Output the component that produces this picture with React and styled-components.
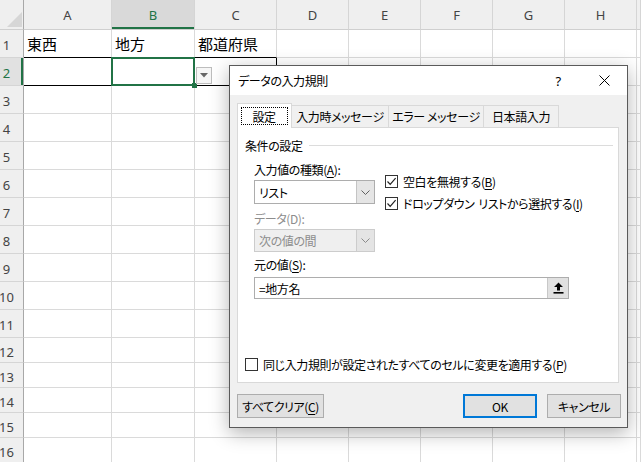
import React from 'react'
import styled, { createGlobalStyle } from 'styled-components'

const GlobalStyle = createGlobalStyle`
  html, body { margin: 0; padding: 0; background: #fff; overflow: hidden; }
`

const COLS = ['A', 'B', 'C', 'D', 'E', 'F', 'G', 'H', '']
const ROWS = Array.from({ length: 16 }, (_, i) => i + 1)
const DATA = { A1: '東西', B1: '地方', C1: '都道府県' }

const Screen = styled.div`
  position: relative;
  width: 641px;
  height: 462px;
  overflow: hidden;
  font-family: "Noto Sans CJK JP", "Noto Sans", sans-serif;
`

const Sheet = styled.div`
  display: grid;
  grid-template-columns: 24px 88px 83px 82px repeat(5, 72px) 1fr;
  grid-template-rows: 30px repeat(11, 28px) repeat(5, 25px);
`

const Corner = styled.div`
  background: #efefef;
  border-right: 1px solid #a8a8a8;
  border-bottom: 1px solid #cfcfcf;
  box-sizing: border-box;
  display: flex;
  align-items: flex-end;
  justify-content: flex-end;
  padding: 0 1px 2px 0;
`

const ColHead = styled.div`
  box-sizing: border-box;
  background: ${p => (p.$active ? '#d9d9d9' : '#efefef')};
  border-right: 1px solid #d5d5d5;
  border-bottom: 1px solid #cfcfcf;
  box-shadow: ${p => (p.$active ? 'inset 0 -2px 0 #217346' : 'none')};
  color: ${p => (p.$active ? '#217346' : '#444')};
  font-family: "Noto Sans", sans-serif;
  font-size: 13px;
  display: flex;
  align-items: center;
  justify-content: center;
`

const RowHead = styled.div`
  box-sizing: border-box;
  background: ${p => (p.$active ? '#e1e1e1' : '#efefef')};
  border-right: 1px solid #a8a8a8;
  border-bottom: 1px solid #d5d5d5;
  box-shadow: ${p => (p.$active ? 'inset -2px 0 0 #217346' : 'none')};
  color: ${p => (p.$active ? '#217346' : '#444')};
  font-family: "Noto Sans", sans-serif;
  font-size: 13px;
  display: flex;
  align-items: center;
  justify-content: center;
  padding: 3px 10px 0 0;
`

const Cell = styled.div`
  position: relative;
  box-sizing: border-box;
  border-right: 1px solid ${p => (p.$boxRight ? '#000' : '#dadada')};
  border-bottom: 1px solid ${p => (p.$boxBottom ? '#000' : '#dadada')};
  font-size: 15px;
  color: #000;
  display: flex;
  align-items: flex-end;
  padding: 0 0 3px 3px;
  white-space: nowrap;

  ${p => p.$selected && `
    &::after {
      content: '';
      position: absolute;
      left: -1px; top: -1px; right: -1px; bottom: -1px;
      border: 2px solid #217346;
      pointer-events: none;
    }
    &::before {
      content: '';
      position: absolute;
      right: -3px; bottom: -3px;
      width: 5px; height: 5px;
      background: #217346;
      z-index: 2;
    }
  `}
`

const CellDrop = styled.div`
  position: absolute;
  left: 1px;
  top: 9px;
  width: 16px;
  height: 17px;
  box-sizing: border-box;
  border: 1px solid #bdbdbd;
  background: #f6f6f6;
  display: flex;
  align-items: center;
  justify-content: center;
  z-index: 3;
`

/* ---------- dialog ---------- */

const Dialog = styled.div`
  position: absolute;
  left: 229px;
  top: 65px;
  width: 399px;
  height: 363px;
  box-sizing: border-box;
  border: 1px solid #5a5a5a;
  background: #f0f0f0;
  box-shadow: 0 5px 18px rgba(0, 0, 0, 0.3);
  display: flex;
  flex-direction: column;
  font-family: "Noto Sans CJK JP", sans-serif;
  font-size: 12px;
  letter-spacing: -0.4px;
  font-feature-settings: "palt";
  color: #000;
  z-index: 10;
`

const TitleBar = styled.div`
  height: 29px;
  background: #fff;
  display: flex;
  align-items: center;
  padding-left: 8px;
`

const Title = styled.div`
  flex: 1;
  font-size: 12px;
`

const TitleButton = styled.div`
  width: 46px;
  height: 29px;
  display: flex;
  align-items: center;
  justify-content: center;
  font-family: "Noto Sans", sans-serif;
  font-size: 13px;
`

const Body = styled.div`
  flex: 1;
  display: flex;
  flex-direction: column;
  padding: 8px 8px 9px 7px;
`

const TabRow = styled.div`
  display: flex;
  align-items: flex-end;
  height: 24px;
`

const Tab = styled.div`
  box-sizing: border-box;
  width: ${p => p.$w}px;
  height: ${p => (p.$active ? 25 : 22)}px;
  margin-left: ${p => (p.$first ? 0 : -1)}px;
  margin-bottom: ${p => (p.$active ? -1 : 0)}px;
  border: 1px solid #d9d9d9;
  border-bottom: none;
  background: ${p => (p.$active ? '#fff' : '#f0f0f0')};
  position: relative;
  z-index: ${p => (p.$active ? 2 : 1)};
  display: flex;
  justify-content: center;
  align-items: ${p => (p.$active ? 'flex-start' : 'center')};
  padding-top: ${p => (p.$active ? 3 : 0)}px;
  white-space: nowrap;
`

const FocusLabel = styled.span`
  box-sizing: border-box;
  width: 47px;
  height: 18px;
  border: 1px dotted #000;
  display: flex;
  align-items: center;
  justify-content: center;
  margin-left: -1px;
`

const Panel = styled.div`
  flex: 1;
  box-sizing: border-box;
  border: 1px solid #d9d9d9;
  background: #fff;
  display: flex;
  flex-direction: column;
  padding: 9px 5px 10px 7px;
`

const GroupHeader = styled.div`
  display: flex;
  align-items: center;
  gap: 6px;
  height: 16px;

  &::after {
    content: '';
    flex: 1;
    height: 1px;
    background: #dcdcdc;
  }
`

const Group = styled.div`
  display: flex;
  flex-direction: column;
  padding-left: 9px;
`

const FormRow = styled.div`
  display: flex;
  gap: 10px;
`

const LeftCol = styled.div`
  width: 121px;
  display: flex;
  flex-direction: column;
`

const RightCol = styled.div`
  display: flex;
  flex-direction: column;
  gap: 1px;
  padding-top: 18px;
`

const Label = styled.div`
  height: 16px;
  line-height: 16px;
  margin-top: ${p => p.$mt}px;
  color: ${p => (p.$disabled ? '#8d8d8d' : '#000')};
  white-space: nowrap;
`

const U = styled.span`
  text-decoration: underline;
  text-underline-offset: 2px;
`

const Gap = styled.span`
  display: inline-block;
  width: 4px;
`

const Select = styled.div`
  box-sizing: border-box;
  width: 121px;
  height: ${p => p.$h}px;
  margin-top: 2px;
  border: 1px solid ${p => (p.$disabled ? '#cccccc' : '#adadad')};
  background: ${p => (p.$disabled ? '#efefef' : '#fff')};
  display: flex;
`

const SelectValue = styled.div`
  flex: 1;
  display: flex;
  align-items: center;
  padding-left: 4px;
  color: ${p => (p.$disabled ? '#8d8d8d' : '#000')};
`

const SelectArrow = styled.div`
  width: 17px;
  background: ${p => (p.$disabled ? '#e4e4e4' : '#e5e5e5')};
  border-left: 1px solid ${p => (p.$disabled ? '#cccccc' : '#c4c4c4')};
  display: flex;
  align-items: center;
  justify-content: center;
`

const CheckRow = styled.div`
  display: flex;
  align-items: center;
  gap: 5px;
  height: 21px;
  white-space: nowrap;
`

const Box = styled.div`
  box-sizing: border-box;
  width: 13px;
  height: 13px;
  border: 1px solid #333;
  background: #fff;
  display: flex;
  align-items: center;
  justify-content: center;
`

const SourceInput = styled.div`
  box-sizing: border-box;
  width: 315px;
  height: 22px;
  margin-top: 4px;
  border: 1px solid #adadad;
  display: flex;
`

const InputText = styled.div`
  flex: 1;
  display: flex;
  align-items: center;
  padding-left: 4px;
`

const RefButton = styled.div`
  width: 20px;
  background: #e1e1e1;
  border-left: 1px solid #c8c8c8;
  display: flex;
  align-items: center;
  justify-content: center;
`

const BottomCheck = styled(CheckRow)`
  margin-top: auto;
  height: 16px;
`

const ButtonRow = styled.div`
  display: flex;
  align-items: center;
  gap: 10px;
  margin-top: 11px;
  margin-right: -2px;
`

const Button = styled.div`
  box-sizing: border-box;
  width: ${p => p.$w}px;
  height: 24px;
  border: ${p => (p.$primary ? '2px solid #0078d7' : '1px solid #adadad')};
  background: #e1e1e1;
  display: flex;
  align-items: center;
  justify-content: center;
  margin-left: ${p => (p.$push ? 'auto' : 0)};
  white-space: nowrap;
`

const Chevron = ({ color = '#606060' }) => (
  <svg width="9" height="5" viewBox="0 0 9 5">
    <polyline points="0.5,0.5 4.5,4.5 8.5,0.5" fill="none" stroke={color} strokeWidth="1" />
  </svg>
)

const Check = () => (
  <svg width="11" height="11" viewBox="0 0 11 11">
    <polyline points="1.5,5.5 4.2,8.3 9.6,2.2" fill="none" stroke="#222" strokeWidth="1.2" />
  </svg>
)

const UpArrow = () => (
  <svg width="11" height="12" viewBox="0 0 11 12">
    <polygon points="5.5,0.5 10,5 7,5 7,8.5 4,8.5 4,5 1,5" fill="#000" />
    <rect x="0.5" y="10" width="10" height="1.6" fill="#000" />
  </svg>
)

const CloseIcon = () => (
  <svg width="11" height="11" viewBox="0 0 11 11">
    <path d="M0.5 0.5 L10.5 10.5 M10.5 0.5 L0.5 10.5" stroke="#000" strokeWidth="1" />
  </svg>
)

const CornerMark = () => (
  <svg width="15" height="15" viewBox="0 0 15 15">
    <polygon points="15,0 15,15 0,15" fill="#d6d6d6" />
  </svg>
)

const DropTriangle = () => (
  <svg width="8" height="5" viewBox="0 0 8 5">
    <polygon points="0,0 8,0 4,4.5" fill="#666" />
  </svg>
)

const TABS = [
  { label: '設定', w: 55, active: true },
  { label: '入力時メッセージ', w: 98 },
  { label: 'エラー メッセージ', w: 96 },
  { label: '日本語入力', w: 76 },
]

function Spreadsheet() {
  const boxCols = ['A', 'B', 'C']
  return (
    <Sheet>
      <Corner><CornerMark /></Corner>
      {COLS.map(c => (
        <ColHead key={'h' + c} $active={c === 'B'}>{c}</ColHead>
      ))}
      {ROWS.map(r => (
        <React.Fragment key={r}>
          <RowHead $active={r === 2}>{r}</RowHead>
          {COLS.map(c => {
            const id = c + r
            const inBox = boxCols.includes(c)
            return (
              <Cell
                key={id}
                $boxBottom={inBox && (r === 1 || r === 2)}
                $boxRight={c === 'C' && r === 2}
                $selected={id === 'B2'}
              >
                {DATA[id]}
                {id === 'C2' && <CellDrop><DropTriangle /></CellDrop>}
              </Cell>
            )
          })}
        </React.Fragment>
      ))}
    </Sheet>
  )
}

function ValidationDialog() {
  return (
    <Dialog>
      <TitleBar>
        <Title>データの入力規則</Title>
        <TitleButton>?</TitleButton>
        <TitleButton><CloseIcon /></TitleButton>
      </TitleBar>
      <Body>
        <TabRow>
          {TABS.map((t, i) => (
            <Tab key={t.label} $w={t.w} $active={t.active} $first={i === 0}>
              {t.active ? <FocusLabel>{t.label}</FocusLabel> : t.label}
            </Tab>
          ))}
        </TabRow>
        <Panel>
          <GroupHeader>条件の設定</GroupHeader>
          <Group>
            <FormRow>
              <LeftCol>
                <Label $mt={9}>入力値の種類(<U>A</U>):</Label>
                <Select $h={24}>
                  <SelectValue>リスト</SelectValue>
                  <SelectArrow><Chevron /></SelectArrow>
                </Select>
                <Label $mt={7} $disabled>データ(D):</Label>
                <Select $h={23} $disabled>
                  <SelectValue $disabled>次の値の間</SelectValue>
                  <SelectArrow $disabled><Chevron color="#8a8a8a" /></SelectArrow>
                </Select>
              </LeftCol>
              <RightCol>
                <CheckRow>
                  <Box><Check /></Box>
                  <span>空白を無視する(<U>B</U>)</span>
                </CheckRow>
                <CheckRow>
                  <Box><Check /></Box>
                  <span>ドロップダウン<Gap />リストから選択する(<U>I</U>)</span>
                </CheckRow>
              </RightCol>
            </FormRow>
            <Label $mt={5}>元の値(<U>S</U>):</Label>
            <SourceInput>
              <InputText>=地方名</InputText>
              <RefButton><UpArrow /></RefButton>
            </SourceInput>
          </Group>
          <BottomCheck>
            <Box />
            <span>同じ入力規則が設定されたすべてのセルに変更を適用する(<U>P</U>)</span>
          </BottomCheck>
        </Panel>
        <ButtonRow>
          <Button $w={87}>すべてクリア(<U>C</U>)</Button>
          <Button $w={74} $primary $push>OK</Button>
          <Button $w={74}>キャンセル</Button>
        </ButtonRow>
      </Body>
    </Dialog>
  )
}

export default function App() {
  return (
    <Screen>
      <GlobalStyle />
      <Spreadsheet />
      <ValidationDialog />
    </Screen>
  )
}
